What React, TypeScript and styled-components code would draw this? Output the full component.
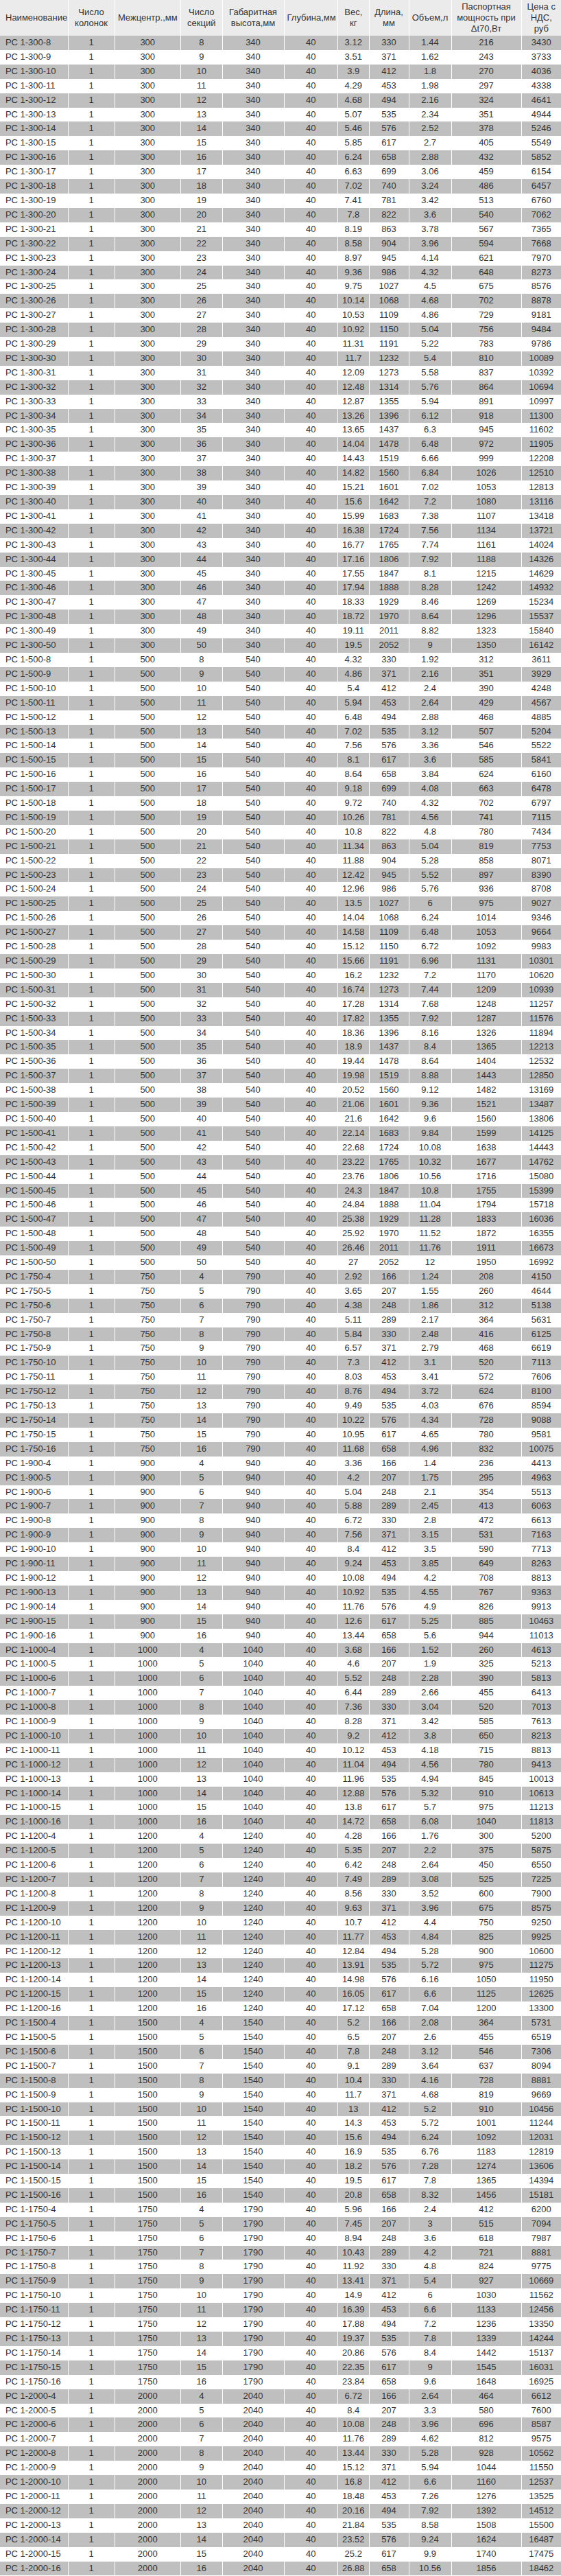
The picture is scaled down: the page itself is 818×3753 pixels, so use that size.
import React from 'react';
import styled, { createGlobalStyle } from 'styled-components';

const GlobalStyle = createGlobalStyle`
  html, body {
    margin: 0;
    padding: 0;
    background: #fff;
  }
  body {
    font-family: 'Liberation Sans Narrow', 'Arial Narrow', 'Liberation Sans', Arial, sans-serif;
    color: #333;
  }
`;

const Table = styled.table`
  width: 818px;
  border-collapse: collapse;
  table-layout: fixed;
  font-size: 13px;
`;

const HeadRow = styled.tr`
  background: #ebebeb;
`;

const HeadCell = styled.th<{ $left?: boolean }>`
  height: 52px;
  padding: 0 4px;
  font-weight: normal;
  line-height: 16px;
  text-align: ${(p) => (p.$left ? 'left' : 'center')};
  padding-left: ${(p) => (p.$left ? '8px' : '4px')};
  vertical-align: middle;
  border-left: 1px solid #fff;
  border-right: 1px solid #fff;
  &:first-child {
    border-left: none;
  }
  &:last-child {
    border-right: none;
  }
`;

const Row = styled.tr<{ $gray: boolean }>`
  background: ${(p) => (p.$gray ? '#bfbfbf' : '#fff')};
`;

const Cell = styled.td<{ $left?: boolean }>`
  height: 20.9px;
  padding: 0 ${(p) => (p.$left ? '4px 0 8px' : '2px')};
  line-height: 20.9px;
  white-space: nowrap;
  overflow: hidden;
  text-align: ${(p) => (p.$left ? 'left' : 'center')};
  border-left: 1px solid #fff;
  border-right: 1px solid #fff;
  &:first-child {
    border-left: none;
  }
  &:last-child {
    border-right: none;
  }
`;

type Series = {
  m: number;
  h: number;
  from: number;
  w: number;
  v: number;
  p: number;
  prices: number[];
};

const SERIES: Series[] = [
  {
    m: 300, h: 340, from: 8, w: 0.39, v: 0.18, p: 27,
    prices: [3430, 3733, 4036, 4338, 4641, 4944, 5246, 5549, 5852, 6154, 6457, 6760, 7062, 7365, 7668, 7970,
      8273, 8576, 8878, 9181, 9484, 9786, 10089, 10392, 10694, 10997, 11300, 11602, 11905, 12208, 12510, 12813,
      13116, 13418, 13721, 14024, 14326, 14629, 14932, 15234, 15537, 15840, 16142],
  },
  {
    m: 500, h: 540, from: 8, w: 0.54, v: 0.24, p: 39,
    prices: [3611, 3929, 4248, 4567, 4885, 5204, 5522, 5841, 6160, 6478, 6797, 7115, 7434, 7753, 8071, 8390,
      8708, 9027, 9346, 9664, 9983, 10301, 10620, 10939, 11257, 11576, 11894, 12213, 12532, 12850, 13169, 13487,
      13806, 14125, 14443, 14762, 15080, 15399, 15718, 16036, 16355, 16673, 16992],
  },
  {
    m: 750, h: 790, from: 4, w: 0.73, v: 0.31, p: 52,
    prices: [4150, 4644, 5138, 5631, 6125, 6619, 7113, 7606, 8100, 8594, 9088, 9581, 10075],
  },
  {
    m: 900, h: 940, from: 4, w: 0.84, v: 0.35, p: 59,
    prices: [4413, 4963, 5513, 6063, 6613, 7163, 7713, 8263, 8813, 9363, 9913, 10463, 11013],
  },
  {
    m: 1000, h: 1040, from: 4, w: 0.92, v: 0.38, p: 65,
    prices: [4613, 5213, 5813, 6413, 7013, 7613, 8213, 8813, 9413, 10013, 10613, 11213, 11813],
  },
  {
    m: 1200, h: 1240, from: 4, w: 1.07, v: 0.44, p: 75,
    prices: [5200, 5875, 6550, 7225, 7900, 8575, 9250, 9925, 10600, 11275, 11950, 12625, 13300],
  },
  {
    m: 1500, h: 1540, from: 4, w: 1.3, v: 0.52, p: 91,
    prices: [5731, 6519, 7306, 8094, 8881, 9669, 10456, 11244, 12031, 12819, 13606, 14394, 15181],
  },
  {
    m: 1750, h: 1790, from: 4, w: 1.49, v: 0.6, p: 103,
    prices: [6200, 7094, 7987, 8881, 9775, 10669, 11562, 12456, 13350, 14244, 15137, 16031, 16925],
  },
  {
    m: 2000, h: 2040, from: 4, w: 1.68, v: 0.66, p: 116,
    prices: [6612, 7600, 8587, 9575, 10562, 11550, 12537, 13525, 14512, 15500, 16487, 17475, 18462],
  },
];

const fmt = (x: number) => String(Math.round(x * 100) / 100);

const rows = SERIES.flatMap((s) =>
  s.prices.map((price, i) => {
    const n = s.from + i;
    return [
      `РС 1-${s.m}-${n}`,
      '1',
      String(s.m),
      String(n),
      String(s.h),
      '40',
      fmt(s.w * n),
      String(41 * n + 2),
      fmt(s.v * n),
      String(s.p * n),
      String(price),
    ];
  })
);

const COLS = [99, 68, 96.5, 60.5, 90, 78.5, 45.5, 58, 62, 102, 58];

const App: React.FC = () => {
  return (
    <>
      <GlobalStyle />
      <Table>
        <colgroup>
          {COLS.map((w, i) => (
            <col key={i} style={{ width: w }} />
          ))}
        </colgroup>
        <thead>
          <HeadRow>
            <HeadCell $left>Наименование</HeadCell>
            <HeadCell>Число<br />колонок</HeadCell>
            <HeadCell>Межцентр.,мм</HeadCell>
            <HeadCell>Число<br />секций</HeadCell>
            <HeadCell>Габаритная<br />высота,мм</HeadCell>
            <HeadCell>Глубина,мм</HeadCell>
            <HeadCell>Вес,<br />кг</HeadCell>
            <HeadCell>Длина,<br />мм</HeadCell>
            <HeadCell>Объем,л</HeadCell>
            <HeadCell>Паспортная<br />мощность при<br />Δt70,Вт</HeadCell>
            <HeadCell>Цена с<br />НДС,<br />руб</HeadCell>
          </HeadRow>
        </thead>
        <tbody>
          {rows.map((r, i) => (
            <Row key={r[0]} $gray={i % 2 === 0}>
              {r.map((c, j) => (
                <Cell key={j} $left={j === 0}>{c}</Cell>
              ))}
            </Row>
          ))}
        </tbody>
      </Table>
    </>
  );
};

export default App;
